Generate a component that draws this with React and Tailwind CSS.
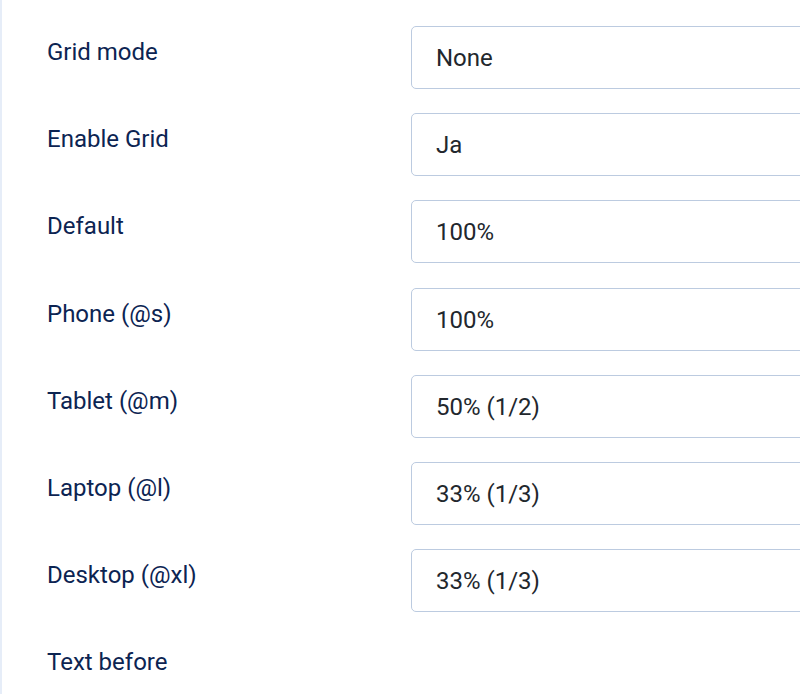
export default function App() {
  const rows = [
    ["Grid mode", "None"],
    ["Enable Grid", "Ja"],
    ["Default", "100%"],
    ["Phone (@s)", "100%"],
    ["Tablet (@m)", "50% (1/2)"],
    ["Laptop (@l)", "33% (1/3)"],
    ["Desktop (@xl)", "33% (1/3)"],
  ];
  return (
    <div className="w-[800px] h-[694px] overflow-hidden bg-white" style={{ fontFamily: "Roboto, 'Noto Sans', sans-serif" }}>
      <div className="h-full border-l-2 border-[#e6edf8] pt-[26px] pl-[45px]">
        {rows.map(([label, value]) => (
          <div key={label} className="flex mb-[24.2px]">
            <div className="w-[364px] shrink-0 pt-[11px] text-[24px] leading-[30px] text-[#0c2452]">{label}</div>
            <div className="w-[430px] shrink-0 h-[63px] border border-[#bccbe0] rounded-[5px] flex items-center pl-[24px] pt-[1px] text-[24px] text-[#22272d]">
              {value}
            </div>
          </div>
        ))}
        <div className="flex">
          <div className="w-[364px] shrink-0 pt-[11px] text-[24px] leading-[30px] text-[#0c2452]">Text before</div>
        </div>
      </div>
    </div>
  );
}
